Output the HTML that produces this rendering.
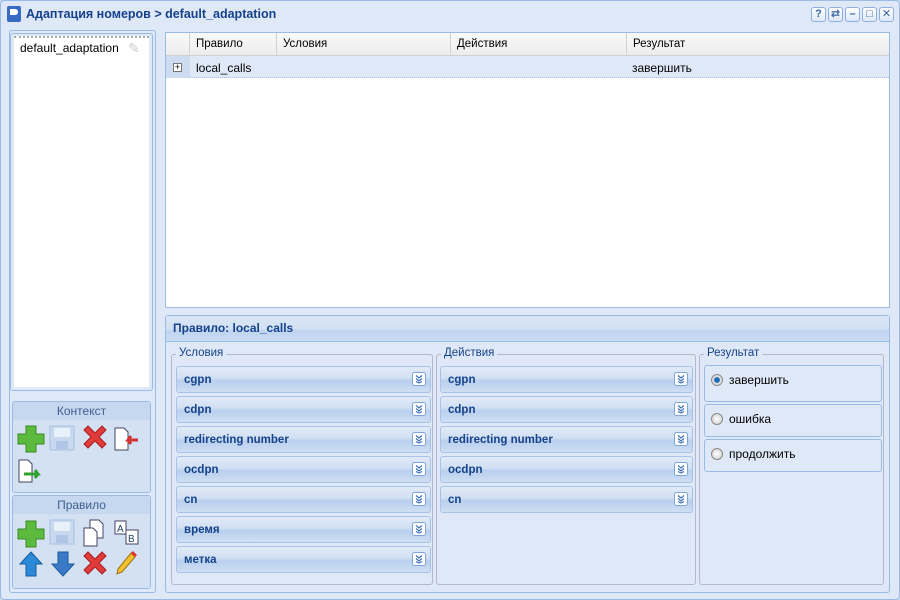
<!DOCTYPE html>
<html><head><meta charset="utf-8"><style>
*{box-sizing:border-box;margin:0;padding:0}
body{width:900px;height:600px;overflow:hidden;background:#cfdcee;font-family:"Liberation Sans","DejaVu Sans",sans-serif;font-size:12px;position:relative}
.a{position:absolute}
.win{left:0;top:0;width:900px;height:600px;border:1px solid #99bbe8;background:#dfe8f6;border-radius:4px}
.title{left:26px;top:7px;font-weight:bold;color:#15428b;font-size:12.5px}
.tb{top:7px;width:15px;height:15px;border:1px solid #8fb0dc;border-radius:3px;background:linear-gradient(#fff,#dce8f7);color:#3a66a5;font-size:11px;font-weight:bold;text-align:center;line-height:13px}
.pan{border:1px solid #99bbe8;background:#dfe8f6}
.hdr{background:linear-gradient(#fafafa,#ececec);border-bottom:1px solid #d0d0d0}
.col{top:0;height:22px;line-height:22px;padding-left:6px;border-right:1px solid #d0d0d0;color:#000;font-size:11.5px}
.fs{border:1px solid #b5b8c8;border-radius:3px}
.lg{background:#dfe8f6;color:#15428b;font-size:11.5px;padding:0 3px;top:-8px;left:4px}
.it{height:27px;border:1px solid #a9c3e8;border-radius:3px;background:linear-gradient(#e2ebf8 0%,#d0dff3 45%,#b9cfee 55%,#cfdef3 100%);color:#15428b;font-weight:bold;font-size:11.5px;line-height:26px;padding-left:7px}
.it svg{position:absolute;right:4px;top:5px}
.rb{border:1px solid #99bbe8;border-radius:3px;left:704px;width:178px}
.rd{left:6px;width:12px;height:12px;border:1px solid #8a8a8a;border-radius:50%;background:radial-gradient(#fff,#ccc)}
.rl{left:24px;font-size:12px;color:#000}
</style></head><body>
<div class="a win"></div>
<div class="a" style="left:7px;top:6px;width:14px;height:16px;background:#3a6bc4;border-radius:2px"></div>
<div class="a" style="left:10px;top:9px;width:8px;height:6px;background:#fff;border-radius:0 3px 3px 0"></div>
<div class="a title">Адаптация номеров &gt; default_adaptation</div>
<div class="a tb" style="left:811px">?</div>
<div class="a tb" style="left:828px">⇄</div>
<div class="a tb" style="left:845px">–</div>
<div class="a tb" style="left:862px">□</div>
<div class="a tb" style="left:879px">✕</div>

<div class="a pan" style="left:9px;top:30px;width:147px;height:563px;border-radius:3px"></div>
<div class="a pan" style="left:10px;top:33px;width:143px;height:358px;border-radius:3px"></div>
<div class="a" style="left:14px;top:36px;width:135px;height:351px;background:#fff;border-top:2px dotted #aaa"></div>
<div class="a" style="left:20px;top:41px;color:#000">default_adaptation</div>
<div class="a" style="left:128px;top:40px;color:#ccc;font-size:14px">✎</div>

<div class="a pan" style="left:12px;top:401px;width:139px;height:92px;border-radius:3px;background:#d4e1f2"></div>
<div class="a" style="left:13px;top:402px;width:137px;height:18px;background:#c6d8f0;color:#406090;text-align:center;line-height:18px">Контекст</div>
<div class="a pan" style="left:12px;top:495px;width:139px;height:94px;border-radius:3px;background:#d4e1f2"></div>
<div class="a" style="left:13px;top:496px;width:137px;height:18px;background:#c6d8f0;color:#406090;text-align:center;line-height:18px">Правило</div>

<svg class="a" style="left:0;top:0" width="160" height="600">
<path d="M26 426h10v8h8v10h-8v8h-10v-8h-8v-10h8z" fill="#5cba3c" stroke="#3a8a25"/>
<rect x="50" y="426" width="24" height="24" fill="#c8d8ee" stroke="#aac0e0"/><rect x="54" y="428" width="16" height="9" fill="#e8f0fa"/><rect x="56" y="441" width="12" height="8" fill="#b0c6e6"/>
<path d="M84 430l4-4 7 7 7-7 4 4-7 7 7 7-4 4-7-7-7 7-4-4 7-7z" fill="#e03a3a" stroke="#a82020"/>
<path d="M115 428h9l4 4v18h-13z" fill="#fff" stroke="#446"/><path d="M138 440h-10l3-4M128 440l3 4" stroke="#d03030" stroke-width="3" fill="none"/>
<path d="M19 460h9l4 4v18h-13z" fill="#fff" stroke="#446"/><path d="M24 474h14l-3-4M38 474l-3 4" stroke="#30a030" stroke-width="3" fill="none"/>
<path d="M26 521h10v8h8v10h-8v8h-10v-8h-8v-10h8z" fill="#5cba3c" stroke="#3a8a25"/>
<rect x="50" y="520" width="24" height="24" fill="#c8d8ee" stroke="#aac0e0"/><rect x="54" y="522" width="16" height="9" fill="#e8f0fa"/><rect x="56" y="535" width="12" height="8" fill="#b0c6e6"/>
<path d="M90 520h9l4 4v14h-13z" fill="#fff" stroke="#446"/><path d="M84 528h9l4 4v14h-13z" fill="#fff" stroke="#446"/>
<rect x="115" y="521" width="11" height="13" fill="#fff" stroke="#446"/><text x="117" y="532" font-size="10" fill="#246">A</text><rect x="126" y="530" width="12" height="14" fill="#fff" stroke="#446"/><text x="128" y="542" font-size="10" fill="#246">B</text>
<path d="M31 552l11 12h-6v12h-10v-12h-6z" fill="#2a8ad8" stroke="#1a5a9a"/>
<path d="M58 552h10v12h6l-11 12-11-12h6z" fill="#3a7ac8" stroke="#1a5a9a"/>
<path d="M84 556l4-4 7 7 7-7 4 4-7 7 7 7-4 4-7-7-7 7-4-4 7-7z" fill="#e03a3a" stroke="#a82020"/>
<path d="M131 553l4 4-13 15-5 2 1-5z" fill="#f0c030" stroke="#a07010"/><path d="M131 553l4 4 2-2-4-4z" fill="#e03030"/>
</svg>

<div class="a pan" style="left:165px;top:32px;width:725px;height:276px;background:#fff">
 <div class="a hdr" style="left:0;top:0;width:723px;height:23px">
  <div class="a col" style="left:0;width:24px"></div>
  <div class="a col" style="left:24px;width:87px">Правило</div>
  <div class="a col" style="left:111px;width:174px">Условия</div>
  <div class="a col" style="left:285px;width:176px">Действия</div>
  <div class="a col" style="left:461px;width:262px;border:0">Результат</div>
 </div>
 <div class="a" style="left:0;top:23px;width:723px;height:22px;background:#dfe8f6;border-bottom:1px dotted #99bbe8"></div>
 <div class="a" style="left:0;top:23px;width:24px;height:22px;background:#cddcf0"></div>
 <div class="a" style="left:7px;top:30px;width:9px;height:9px;border:1px solid #777;background:#fff;font-size:9px;line-height:7px;text-align:center">+</div>
 <div class="a" style="left:30px;top:28px">local_calls</div>
 <div class="a" style="left:466px;top:28px">завершить</div>
</div>

<div class="a pan" style="left:165px;top:315px;width:725px;height:278px;border-radius:3px"></div>
<div class="a" style="left:166px;top:316px;width:723px;height:26px;background:linear-gradient(#dae6f5 0%,#d2e1f4 50%,#bfd4f0 60%,#cadbf2 100%);border-bottom:1px solid #99bbe8"></div>
<div class="a" style="left:173px;top:321px;font-weight:bold;color:#15428b">Правило: local_calls</div>

<div class="a fs" style="left:171px;top:354px;width:262px;height:231px"><div class="a lg">Условия</div></div>
<div class="a fs" style="left:436px;top:354px;width:260px;height:231px"><div class="a lg">Действия</div></div>
<div class="a fs" style="left:699px;top:354px;width:185px;height:231px"><div class="a lg">Результат</div></div>

<svg width="0" height="0" style="position:absolute"><defs><g id="ch"><rect x="0.5" y="0.5" width="13" height="13" rx="2" fill="#fff" stroke="#7fa5d8"/><path d="M4 3.5l3 2.5 3-2.5M4 6.5l3 2.5 3-2.5M4 9.5l3 1.5 3-1.5" stroke="#3b6fb6" stroke-width="1.2" fill="none"/></g></defs></svg>

<div class="a it" style="left:176px;top:366px;width:255px">cgpn<svg width="14" height="14"><use href="#ch"/></svg></div>
<div class="a it" style="left:176px;top:396px;width:255px">cdpn<svg width="14" height="14"><use href="#ch"/></svg></div>
<div class="a it" style="left:176px;top:426px;width:255px">redirecting number<svg width="14" height="14"><use href="#ch"/></svg></div>
<div class="a it" style="left:176px;top:456px;width:255px">ocdpn<svg width="14" height="14"><use href="#ch"/></svg></div>
<div class="a it" style="left:176px;top:486px;width:255px">cn<svg width="14" height="14"><use href="#ch"/></svg></div>
<div class="a it" style="left:176px;top:516px;width:255px">время<svg width="14" height="14"><use href="#ch"/></svg></div>
<div class="a it" style="left:176px;top:546px;width:255px">метка<svg width="14" height="14"><use href="#ch"/></svg></div>

<div class="a it" style="left:440px;top:366px;width:253px">cgpn<svg width="14" height="14"><use href="#ch"/></svg></div>
<div class="a it" style="left:440px;top:396px;width:253px">cdpn<svg width="14" height="14"><use href="#ch"/></svg></div>
<div class="a it" style="left:440px;top:426px;width:253px">redirecting number<svg width="14" height="14"><use href="#ch"/></svg></div>
<div class="a it" style="left:440px;top:456px;width:253px">ocdpn<svg width="14" height="14"><use href="#ch"/></svg></div>
<div class="a it" style="left:440px;top:486px;width:253px">cn<svg width="14" height="14"><use href="#ch"/></svg></div>

<div class="a rb" style="top:365px;height:37px"><div class="a rd" style="top:8px;background:radial-gradient(#1a6ab8 35%,#ddd 45%)"></div><div class="a rl" style="top:7px">завершить</div></div>
<div class="a rb" style="top:404px;height:33px"><div class="a rd" style="top:8px"></div><div class="a rl" style="top:7px">ошибка</div></div>
<div class="a rb" style="top:439px;height:33px"><div class="a rd" style="top:8px"></div><div class="a rl" style="top:7px">продолжить</div></div>
</body></html>
